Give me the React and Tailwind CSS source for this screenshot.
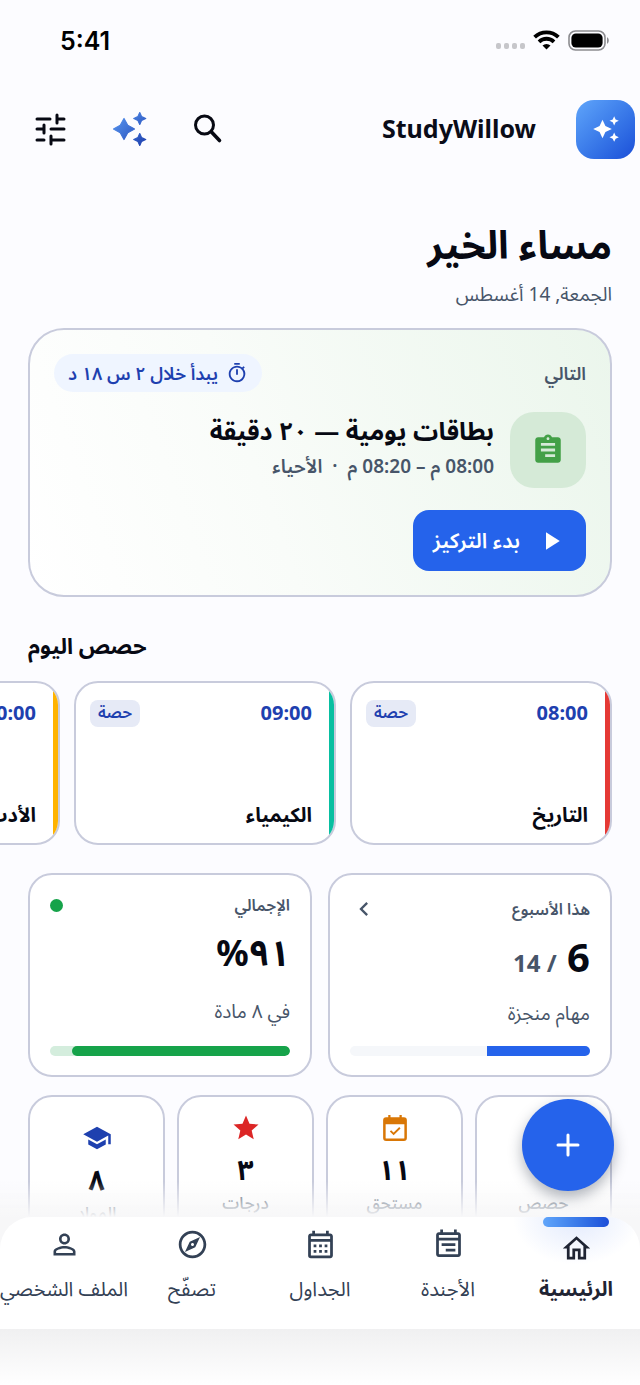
import React from 'react';
import {
    MdTune, MdAutoAwesome, MdOutlineTimer, MdAssignment, MdPlayArrow,
    MdStar, MdSchool, MdPersonOutline, MdOutlineExplore,
    MdOutlineCalendarMonth, MdOutlineEventNote, MdOutlineHome, MdChevronLeft, MdClass,
} from 'react-icons/md';

const DueIcon = ({ size, className }) => (
    <svg viewBox="0 0 24 24" width={size} height={size} className={className} fill="none" stroke="currentColor">
        <path d="M3.500 4h17v5h-17z" fill="currentColor" stroke="none" />
        <rect x="3.500" y="4.300" width="17" height="17" rx="1.400" strokeWidth="2" />
        <path d="M7.500 1.500v3M16.500 1.500v3" strokeWidth="1.800" />
        <path d="M8.400 14.300l2.500 2.500 5-5" strokeWidth="1.500" />
    </svg>
);

const lessons = [
    { time: '08:00', subject: 'التاريخ', stripe: 'bg-[#e53935]' },
    { time: '09:00', subject: 'الكيمياء', stripe: 'bg-[#08bfa1]' },
    { time: '10:00', subject: 'الأدب', stripe: 'bg-[#ffb300]' },
];

const counters = [
    { icon: MdClass, color: 'text-[#2563eb]', value: '٤', label: 'حصص', pad: 'pt-4' },
    { icon: DueIcon, color: 'text-[#d97706]', value: '١١', label: 'مستحق', pad: 'pt-4' },
    { icon: MdStar, color: 'text-[#dc2626]', value: '٣', label: 'درجات', pad: 'pt-4' },
    { icon: MdSchool, color: 'text-[#1e40af]', value: '٨', label: 'المواد', pad: 'pt-[26px]' },
];

const tabs = [
    { icon: MdOutlineHome, label: 'الرئيسية', active: true },
    { icon: MdOutlineEventNote, label: 'الأجندة', flip: true },
    { icon: MdOutlineCalendarMonth, label: 'الجداول' },
    { icon: MdOutlineExplore, label: 'تصفّح' },
    { icon: MdPersonOutline, label: 'الملف الشخصي' },
];

const StatusBar = () => (
    <div dir="ltr" className="flex items-center justify-between h-20 pl-15 pr-[30px] text-black">
        <span className="pt-1 font-['Inter',sans-serif] text-[25px] font-semibold">5:41</span>
        <div className="flex items-center gap-2">
            <div className="flex gap-[3px] pt-3">
                {[0, 1, 2, 3].map((i) => (
                    <span key={i} className="w-[5px] h-[6px] rounded-xs bg-[#c6c6ca]" />
                ))}
            </div>
            <svg viewBox="0 0 27 20" className="w-[27px] h-5" fill="none" stroke="currentColor" strokeWidth="3.8">
                <path d="M1.6 7.2a17 17 0 0 1 23.8 0" />
                <path d="M6 11.8a10.8 10.8 0 0 1 15 0" />
                <path d="M13.5 19.6l-4-4.1a5.8 5.8 0 0 1 8 0z" fill="currentColor" stroke="none" />
            </svg>
            <svg viewBox="0 0 42 21" className="w-[42px] h-[21px]">
                <rect x="1" y="1" width="36" height="19" rx="6.5" fill="none" stroke="#8c8c90" strokeWidth="1.6" />
                <rect x="3.4" y="3.4" width="31.2" height="14.2" rx="4.5" fill="#000" />
                <path d="M39 7.2c2.400 1 2.400 5.600 0 6.600z" fill="#8c8c90" />
            </svg>
        </div>
    </div>
);

const Header = () => (
    <header className="flex items-center justify-between h-[98px] pr-[5px] pl-8">
        <div className="flex items-center gap-10">
            <div className="flex items-center justify-center w-[59px] h-[59px] rounded-[18px] bg-linear-to-br from-[#60a5fa] to-[#1d4ed8] text-white">
                <MdAutoAwesome size={28} />
            </div>
            <span className="text-[25px] font-bold text-[#0a0c18]">StudyWillow</span>
        </div>
        <div className="flex items-center gap-11 text-[#070913]">
            <button aria-label="بحث">
                <svg viewBox="0 0 36 36" className="w-9 h-9" fill="none" stroke="currentColor" strokeWidth="3" strokeLinecap="round">
                    <circle cx="12.500" cy="14" r="9" />
                    <path d="M19.500 21l8 8.500" strokeWidth="3.600" />
                </svg>
            </button>
            <button aria-label="المساعد">
                <svg viewBox="0 0 24 24" className="w-9 h-9" fill="url(#spark)">
                    <defs>
                        <linearGradient id="spark" x1="0" y1="0" x2="1" y2="1">
                            <stop offset="0" stopColor="#5b9cf5" />
                            <stop offset="1" stopColor="#1e40af" />
                        </linearGradient>
                    </defs>
                    <path
                        d="M18.500 9l1.250-2.750L22.500 5l-2.750-1.250L18.500 1l-1.250 2.750L14.500 5l2.750 1.250zM10.500 9.500L8 5 5.500 9.500 1 12l4.500 2.500L8 19l2.500-4.500L15 12zM18.500 15l-1.250 2.750L14.500 19l2.750 1.250L18.500 23l1.250-2.750L22.500 19l-2.750-1.250z"
                        stroke="url(#spark)"
                        strokeWidth="0.8"
                        strokeLinejoin="round"
                    />
                </svg>
            </button>
            <button aria-label="الإعدادات">
                <svg viewBox="0 0 36 36" className="w-9 h-9" fill="none" stroke="currentColor" strokeWidth="3" strokeLinecap="round">
                    <path d="M5 8h13M25 8h7M25 4v8" />
                    <path d="M5 18h7M12 14v8M19 18h13" />
                    <path d="M5 29h7M19 29h13M19 25v8" />
                </svg>
            </button>
        </div>
    </header>
);

const NextCard = () => (
    <section className="mt-4 p-6 rounded-[36px] border-2 border-[#c8cbdc] bg-linear-[250deg] from-[#ebf6ec] via-[#f9fcf9] via-60% to-white">
        <div className="flex items-center justify-between">
            <h2 className="text-lg font-semibold text-[#475569]">التالي</h2>
            <div className="flex items-center gap-2 h-[38px] px-[14px] rounded-full bg-[#eff5ff] text-[#1e40af]">
                <MdOutlineTimer size={22} />
                <span className="text-lg font-semibold">يبدأ خلال ٢ س ١٨ د</span>
            </div>
        </div>
        <div className="flex items-center gap-4 mt-5">
            <div className="flex items-center justify-center w-19 h-19 rounded-3xl bg-[#d5ead7] text-[#43a047]">
                <MdAssignment size={34} className="-scale-x-100" />
            </div>
            <div className="pb-1">
                <h3 className="text-[25px] leading-9 font-bold text-[#070913]">بطاقات يومية — ٢٠ دقيقة</h3>
                <p className="text-[19px] leading-9 font-semibold text-[#475569] whitespace-pre">08:00 م – 08:20 م  ·  الأحياء</p>
            </div>
        </div>
        <button className="flex items-center gap-4 h-[61px] mt-[22px] px-5 rounded-2xl bg-[#2563eb] text-white">
            <MdPlayArrow size={30} />
            <span className="text-[21px] font-semibold">بدء التركيز</span>
        </button>
    </section>
);

const LessonCard = ({ time, subject, stripe }) => (
    <article className="relative shrink-0 flex flex-col justify-between w-[262px] h-41 px-[22px] pl-[14px] py-3 rounded-3xl border-2 border-[#c8cbdc] bg-white overflow-hidden">
        <span className={`absolute inset-y-0 right-0 w-[5px] ${stripe}`} />
        <div className="flex items-center justify-between h-9">
            <span className="text-xl font-bold text-[#1e40af]">{time}</span>
            <span className="h-[27px] px-2 rounded-lg bg-[#e6eaf6] text-base leading-6 font-semibold text-[#1e40af]">حصة</span>
        </div>
        <h3 className="text-xl leading-8 font-bold text-[#070913]">{subject}</h3>
    </article>
);

const Summary = () => (
    <section className="grid grid-cols-2 gap-4 mt-7">
        <article className="h-51 px-5 pt-4 rounded-3xl border-2 border-[#c8cbdc] bg-white">
            <div className="flex items-center justify-between h-9">
                <h3 className="text-base font-semibold text-[#475569]">هذا الأسبوع</h3>
                <MdChevronLeft size={28} className="text-[#475569]" />
            </div>
            <p className="h-15 text-[40px] leading-15 font-bold text-[#070913]">
                6 <span className="text-2xl text-[#475569]">/ 14</span>
            </p>
            <p className="h-12 text-[19px] leading-13 text-[#475569]">مهام منجزة</p>
            <div className="h-[10px] mt-[11px] rounded-full bg-[#f5f7fa] overflow-hidden">
                <div className="h-full bg-[#2563eb]" style={{ width: `${(6 / 14) * 100}%` }} />
            </div>
        </article>
        <article className="h-51 px-5 pt-3 rounded-3xl border-2 border-[#c8cbdc] bg-white">
            <div className="flex items-center justify-between h-9">
                <h3 className="text-base font-semibold text-[#475569]">الإجمالي</h3>
                <span className="w-[13px] h-[13px] rounded-full bg-[#16a34a]" />
            </div>
            <p className="h-15 text-4xl leading-15 font-bold text-[#070913]">٩١%</p>
            <p className="h-12 text-[19px] leading-14 text-[#475569]">في ٨ مادة</p>
            <div className="h-[10px] mt-[15px] rounded-full bg-[#d4eddd] overflow-hidden">
                <div className="h-full rounded-full bg-[#16a34a]" style={{ width: '91%' }} />
            </div>
        </article>
    </section>
);

const BottomNav = () => (
    <div className="fixed inset-x-0 bottom-0">
        <div className="h-9 bg-linear-to-b from-[#f7f7f8]/0 to-[#f7f7f8]" />
        <div className="bg-[#f7f7f8]">
            <nav className="relative grid grid-cols-5 h-28 rounded-t-[32px] bg-white overflow-hidden">
                {tabs.map(({ icon: Icon, label, active, flip }) => (
                    <a
                        key={label}
                        href="#"
                        className={`relative flex flex-col items-center ${active ? 'font-bold text-[#1f2433]' : 'text-[#334155]'}`}
                    >
                        {active && (
                            <>
                                <span className="absolute top-0 w-32 h-12 bg-radial-[at_50%_0%] from-[#cfdcfb] to-transparent to-70% opacity-60" />
                                <span className="absolute top-0 w-[66px] h-[10px] rounded-full bg-linear-to-r from-[#60a5fa] to-[#1d4ed8]" />
                            </>
                        )}
                        <span className={`relative flex items-end ${active ? 'h-12' : 'h-11'}`}>
                            <Icon size={33} className={flip ? '-scale-x-100' : ''} />
                        </span>
                        <span className={`relative text-xl leading-8 whitespace-nowrap ${active ? 'mt-2' : 'mt-3'}`}>{label}</span>
                    </a>
                ))}
            </nav>
        </div>
        <div className="h-14 bg-linear-to-b from-[#f0f0f1] to-white" />
        <button
            aria-label="إضافة"
            className="absolute right-[26px] bottom-[194px] flex items-center justify-center w-23 h-23 rounded-full bg-[#2563eb] text-white shadow-[0_6px_14px_rgba(30,41,59,0.35)]"
        >
            <svg viewBox="0 0 24 24" className="w-6 h-6" fill="none" stroke="currentColor" strokeWidth="3" strokeLinecap="round">
                <path d="M12 2v20M2 12h20" />
            </svg>
        </button>
    </div>
);

const App = () => {
    return (
        <div dir="rtl" className="min-h-screen bg-[#fcfcff] font-['Noto_Sans','Noto_Sans_Arabic','DejaVu_Sans',sans-serif] overflow-hidden">
            <StatusBar />
            <Header />
            <main className="px-7">
                {/* Greeting */}
                <h1 className="mt-[34px] text-[39px] leading-16 font-bold text-[#070913]">مساء الخير</h1>
                <p className="text-[19px] leading-9 text-[#475569]">الجمعة, 14 أغسطس</p>

                <NextCard />

                {/* Today's lessons */}
                <h2 className="mt-7 text-[22px] leading-10 font-bold text-[#070913] text-left">حصص اليوم</h2>
                <div className="flex gap-[14px] mt-4 -ml-7 overflow-hidden">
                    {lessons.map((lesson) => (
                        <LessonCard key={lesson.time} {...lesson} />
                    ))}
                </div>

                <Summary />

                <section className="grid grid-cols-4 gap-3 mt-[18px]">
                    {counters.map(({ icon: Icon, color, value, label, pad }) => (
                        <article key={label} className={`flex flex-col items-center h-36 ${pad} rounded-3xl border-2 border-[#c8cbdc] bg-white`}>
                            <Icon size={30} className={color} />
                            <span className="mt-1 text-[28px] leading-11 font-bold text-[#070913]">{value}</span>
                            <span className="text-[17px] leading-6 font-medium text-[#475569]">{label}</span>
                        </article>
                    ))}
                </section>
            </main>
            <BottomNav />
        </div>
    );
};

export default App;
